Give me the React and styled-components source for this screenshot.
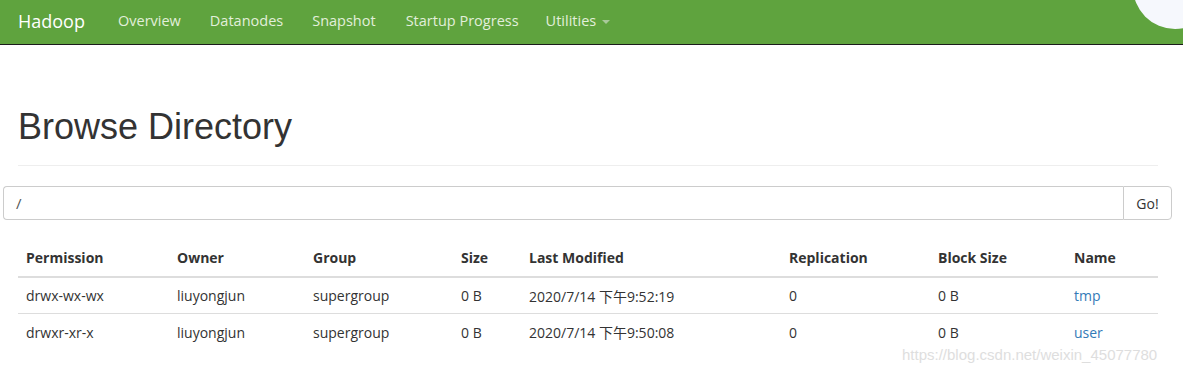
import React from "react";
import styled, { createGlobalStyle } from "styled-components";

const Global = createGlobalStyle`
  html, body { margin: 0; padding: 0; background: #fff; }
  body { font-family: "Open Sans", "Noto Sans CJK SC", sans-serif; font-size: 14px; color: #333; overflow: hidden; }
`;

const Navbar = styled.nav`
  position: relative;
  height: 45px;
  box-sizing: border-box;
  padding-bottom: 3px;
  background: #5fa33e;
  border-bottom: 1px solid #1b1b1b;
  display: flex;
  align-items: center;
  padding-left: 18px;
  overflow: hidden;
`;

const Brand = styled.a`
  color: #fff;
  font-size: 18px;
  margin-right: 33px;
  font-family: "Open Sans", sans-serif;
`;

const NavItem = styled.a`
  color: #e2efdb;
  font-size: 14.5px;
  margin-right: ${(p) => p.$gap}px;
  display: flex;
  align-items: center;
`;

const Caret = styled.span`
  display: inline-block;
  margin-left: 6px;
  margin-top: 2px;
  border-top: 4px solid #a9c99a;
  border-left: 4px solid transparent;
  border-right: 4px solid transparent;
`;

const Blob = styled.div`
  position: absolute;
  left: 1133px;
  top: -55px;
  width: 84px;
  height: 84px;
  border-radius: 50%;
  background: #f6f8fd;
`;

const Page = styled.main`
  padding: 0 25px 0 18px;
`;

const Title = styled.h1`
  margin: 0;
  padding-top: 62px;
  font-family: "Liberation Sans", Arial, sans-serif;
  font-weight: 400;
  font-size: 36px;
  line-height: 40px;
  color: #333;
  padding-bottom: 18px;
  border-bottom: 1px solid #eee;
`;

const SearchRow = styled.div`
  display: flex;
  margin: 20px -14px 0 -15px;
  height: 34px;
`;

const Input = styled.div`
  flex: 1;
  border: 1px solid #ccc;
  border-right: none;
  border-radius: 4px 0 0 4px;
  padding: 0 12px;
  display: flex;
  align-items: center;
  font-size: 15px;
  color: #555;
`;

const GoButton = styled.button`
  width: 49px;
  border: 1px solid #ccc;
  border-radius: 0 4px 4px 0;
  background: #fff;
  font-family: "Open Sans", sans-serif;
  font-size: 14px;
  color: #333;
  padding: 0;
`;

const Table = styled.table`
  margin-top: 18px;
  width: 1140px;
  border-collapse: collapse;
  table-layout: fixed;
`;

const Th = styled.th`
  text-align: left;
  font-weight: 700;
  padding: 0 8px;
  height: 38px;
  vertical-align: middle;
  border-bottom: 2px solid #ddd;
`;

const Td = styled.td`
  padding: 0 8px;
  height: ${(p) => (p.$first ? 35 : 36)}px;
  vertical-align: middle;
  border-top: ${(p) => (p.$first ? "none" : "1px solid #ddd")};
`;

const Link = styled.a`
  color: #337ab7;
  text-decoration: none;
`;

const Watermark = styled.div`
  position: absolute;
  left: 902px;
  top: 346px;
  font-family: "Liberation Sans", Arial, sans-serif;
  font-size: 15px;
  color: #dedede;
`;

const cols = [151, 136, 148, 68, 260, 149, 136, 92];
const heads = ["Permission", "Owner", "Group", "Size", "Last Modified", "Replication", "Block Size", "Name"];
const rows = [
  ["drwx-wx-wx", "liuyongjun", "supergroup", "0 B", "2020/7/14 下午9:52:19", "0", "0 B", "tmp"],
  ["drwxr-xr-x", "liuyongjun", "supergroup", "0 B", "2020/7/14 下午9:50:08", "0", "0 B", "user"],
];

export default function App() {
  return (
    <>
      <Global />
      <Navbar>
        <Brand>Hadoop</Brand>
        <NavItem $gap={29}>Overview</NavItem>
        <NavItem $gap={29}>Datanodes</NavItem>
        <NavItem $gap={30}>Snapshot</NavItem>
        <NavItem $gap={27}>Startup Progress</NavItem>
        <NavItem $gap={0}>Utilities<Caret /></NavItem>
        <Blob />
      </Navbar>
      <Page>
        <Title>Browse Directory</Title>
        <SearchRow>
          <Input>/</Input>
          <GoButton>Go!</GoButton>
        </SearchRow>
        <Table>
          <colgroup>
            {cols.map((w, i) => <col key={i} style={{ width: w }} />)}
          </colgroup>
          <thead>
            <tr>{heads.map((h) => <Th key={h}>{h}</Th>)}</tr>
          </thead>
          <tbody>
            {rows.map((r, ri) => (
              <tr key={ri}>
                {r.map((c, ci) => (
                  <Td key={ci} $first={ri === 0}>
                    {ci === 7 ? <Link>{c}</Link> : c}
                  </Td>
                ))}
              </tr>
            ))}
          </tbody>
        </Table>
      </Page>
      <Watermark>https://blog.csdn.net/weixin_45077780</Watermark>
    </>
  );
}
